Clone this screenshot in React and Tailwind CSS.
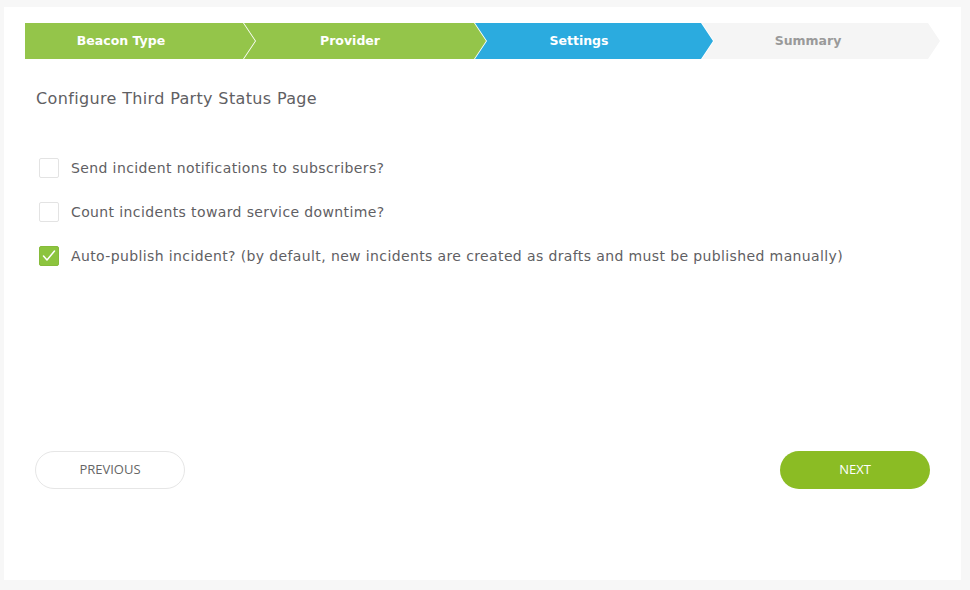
import React from "react";

const body = { fontFamily: '"DejaVu Sans", "Liberation Sans", sans-serif' };
const btnFont = { fontFamily: '"Open Sans", "Liberation Sans", sans-serif' };

function Step({ label, className, first, textClass, width, pr }) {
  const clip = first
    ? "polygon(0 0, calc(100% - 12px) 0, 100% 50%, calc(100% - 12px) 100%, 0 100%)"
    : "polygon(0 0, calc(100% - 12px) 0, 100% 50%, calc(100% - 12px) 100%, 0 100%, 12px 50%)";
  return (
    <div
      className={`h-[36px] flex items-center justify-center shrink-0 ${first ? "" : "-ml-[11px]"} ${className} ${width} ${pr}`}
      style={{ clipPath: clip }}
    >
      <span className={`text-[12.5px] font-bold ${textClass}`}>{label}</span>
    </div>
  );
}

function Check({ checked, label }) {
  return (
    <div className="flex items-center h-[20px]">
      <div
        className={`w-[20px] h-[20px] rounded-[2px] border flex items-center justify-center shrink-0 ${
          checked ? "bg-[#8cc43e] border-[#86bb3a]" : "bg-white border-[#e3e3e3]"
        }`}
      >
        {checked && (
          <svg width="16" height="16" viewBox="0 0 16 16" fill="none">
            <polyline points="2.5,8 6,12 13.5,3" stroke="white" strokeWidth="1.5" strokeLinecap="round" strokeLinejoin="round" />
          </svg>
        )}
      </div>
      <span className="ml-[12px] text-[14px] text-[#5f6063] tracking-[0.38px] whitespace-nowrap">{label}</span>
    </div>
  );
}

export default function App() {
  return (
    <div className="w-[970px] h-[590px] bg-[#f7f7f7] pt-[7px] pl-[4px] pr-[9px]" style={body}>
      <div className="h-[573px] bg-white pt-[16px] px-[21px] flex flex-col">
        <div className="flex">
          <Step first label="Beacon Type" width="w-[230px]" pr="pr-[38px]" className="bg-[#94c54a]" textClass="text-white" />
          <Step label="Provider" width="w-[242px]" pr="pr-[30px]" className="bg-[#94c54a]" textClass="text-white" />
          <Step label="Settings" width="w-[238px]" pr="pr-[30px]" className="bg-[#2babdf]" textClass="text-white" />
          <Step label="Summary" width="w-[238px]" pr="pr-[26px]" className="bg-[#f5f5f5]" textClass="text-[#9a9a9a]" />
        </div>
        <div className="mt-[29px] pl-[11px] text-[16px] leading-[22px] tracking-[0.35px] text-[#5f6063]">
          Configure Third Party Status Page
        </div>
        <div className="mt-[48px] pl-[14px] flex flex-col gap-[24px]">
          <Check label="Send incident notifications to subscribers?" />
          <Check label="Count incidents toward service downtime?" />
          <Check checked label="Auto-publish incident? (by default, new incidents are created as drafts and must be published manually)" />
        </div>
        <div className="mt-[185px] flex justify-between pl-[10px] pr-[10px]" style={btnFont}>
          <button className="w-[150px] h-[38px] rounded-full border border-[#e6e6e6] bg-white text-[13px] text-[#666] uppercase">
            Previous
          </button>
          <button className="w-[150px] h-[38px] rounded-full bg-[#8bbc24] text-[13px] text-white uppercase">
            Next
          </button>
        </div>
      </div>
    </div>
  );
}
